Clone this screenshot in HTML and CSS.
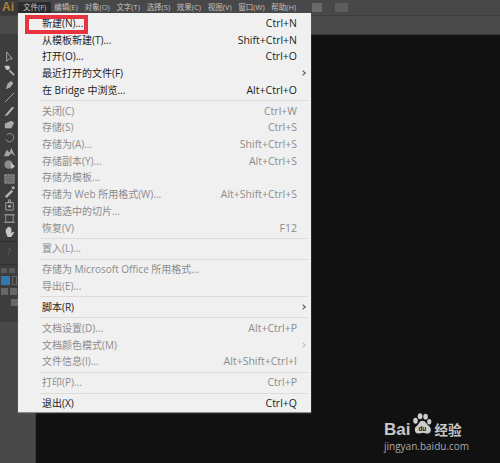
FILE: index.html
```html
<!DOCTYPE html>
<html lang="zh-CN">

<head>
    <meta charset="UTF-8">
    <title>Illustrator</title>
    <link rel="stylesheet" href="styles.css">
</head>

<body>
    <div class="menubar">
        <span class="logo">Ai</span>
        <span class="top-item active">文件(F)</span>
        <span class="top-item">编辑(E)</span>
        <span class="top-item">对象(O)</span>
        <span class="top-item">文字(T)</span>
        <span class="top-item">选择(S)</span>
        <span class="top-item">效果(C)</span>
        <span class="top-item">视图(V)</span>
        <span class="top-item">窗口(W)</span>
        <span class="top-item">帮助(H)</span>
        <span class="bar-btn"></span>
        <span class="bar-btn wide"></span>
    </div>
    <div class="optionsbar"></div>

    <div class="workspace">
        <div class="sidebar">
            <div class="tools">
                <svg class="tool" viewBox="0 0 14 14"><path d="M4 1v10l3-2.500 3 0z" fill="none" stroke="#c4c4c4"/></svg>
                <svg class="tool" viewBox="0 0 14 14"><path d="M2 2l3 3M7 7l5 5" stroke="#bbb" stroke-width="2"/><circle cx="5" cy="4" r="2.500" fill="#ddd"/></svg>
                <svg class="tool" viewBox="0 0 14 14"><path d="M3 12l2-6 4-3 2 3-3 4z" fill="#bbb"/></svg>
                <svg class="tool" viewBox="0 0 14 14"><path d="M2 12L12 2" stroke="#bbb"/></svg>
                <svg class="tool" viewBox="0 0 14 14"><path d="M2 12l3-1 7-8-2-1-7 8z" fill="#c8c8c8"/></svg>
                <svg class="tool" viewBox="0 0 14 14"><path d="M2 11V6l7-3 3 2-3 6z" fill="#bdbdbd"/></svg>
                <svg class="tool" viewBox="0 0 14 14"><path d="M4 4a4.500 4.500 0 1 1-1 5" fill="none" stroke="#aaa"/></svg>
                <svg class="tool" viewBox="0 0 14 14"><path d="M1 12l3-7 3 3 2-5 4 9-4-3-3 3z" fill="#b5b5b5"/></svg>
                <svg class="tool" viewBox="0 0 14 14"><circle cx="6" cy="7" r="4.500" fill="#9a9a9a"/><path d="M8 5l5 4-4 3z" fill="#ddd"/></svg>
                <svg class="tool" viewBox="0 0 14 14"><path d="M2 3h10v9H2z" fill="#777" stroke="#bbb" stroke-dasharray="2 1"/></svg>
                <svg class="tool" viewBox="0 0 14 14"><path d="M2 12l7-7 2 2-7 7zM9 3l2 2 2-2-2-2z" fill="#c4c4c4"/></svg>
                <svg class="tool" viewBox="0 0 14 14"><path d="M3 5h8v8H3zM6 2h2v3H6z" fill="none" stroke="#bbb"/><circle cx="7" cy="9" r="1.500" fill="#ccc"/></svg>
                <svg class="tool" viewBox="0 0 14 14"><path d="M3 3h8v8H3zM1 3h12M1 11h12" fill="none" stroke="#aaa"/></svg>
                <svg class="tool" viewBox="0 0 14 14"><path d="M3 8V4h1.500v3V2.500H6V7 2H7.500v5-4H9v6l2-2 1 1-3 5H5z" fill="#e0e0e0"/></svg>
                <div class="tool-rule"></div>
                <span class="tool-help">?</span>
                <div class="tool-rule"></div>
                <div class="swatches">
                    <span class="swatch-small"></span>
                    <span class="swatch-small"></span>
                </div>
                <div class="swatches">
                    <span class="swatch-blue"></span>
                    <span class="swatch-outline"></span>
                </div>
                <div class="swatches">
                    <span class="swatch-mode"></span>
                    <span class="swatch-mode"></span>
                </div>
                <div class="swatches end">
                    <span class="swatch-mode"></span>
                </div>
            </div>
        </div>
        <div class="canvas">
            <div class="watermark">
                <div class="wm-logo">
                    <span class="wm-bai">Bai</span>
                    <svg class="wm-paw" viewBox="0 0 24 24">
                        <ellipse cx="6" cy="9" rx="2.500" ry="3.200" fill="#ccc"/>
                        <ellipse cx="11" cy="4" rx="2.600" ry="3.300" fill="#ccc"/>
                        <ellipse cx="17" cy="4.500" rx="2.500" ry="3.200" fill="#ccc"/>
                        <ellipse cx="21" cy="10" rx="2.300" ry="3" fill="#ccc"/>
                        <path d="M13.500 9C10 9 10 13 7 15c-3 2-2 8 2 8 2 0 3-1 5-1s3 1 5 1c4 0 5-5 2-8-3-2-4-6-7.500-6z" fill="#ccc"/>
                        <text x="13.500" y="20.500" class="wm-du">du</text>
                    </svg>
                    <span class="wm-cn">经验</span>
                </div>
                <div class="wm-url">jingyan.baidu.com</div>
            </div>
        </div>
    </div>

    <div class="menu">
        <div class="row"><span>新建(N)...</span><span class="keys">Ctrl+N</span></div>
        <div class="row"><span>从模板新建(T)...</span><span class="keys">Shift+Ctrl+N</span></div>
        <div class="row"><span>打开(O)...</span><span class="keys">Ctrl+O</span></div>
        <div class="row arrow"><span>最近打开的文件(F)</span></div>
        <div class="row"><span>在 Bridge 中浏览...</span><span class="keys">Alt+Ctrl+O</span></div>
        <div class="sep"></div>
        <div class="row off"><span>关闭(C)</span><span class="keys">Ctrl+W</span></div>
        <div class="row off"><span>存储(S)</span><span class="keys">Ctrl+S</span></div>
        <div class="row off"><span>存储为(A)...</span><span class="keys">Shift+Ctrl+S</span></div>
        <div class="row off"><span>存储副本(Y)...</span><span class="keys">Alt+Ctrl+S</span></div>
        <div class="row off"><span>存储为模板...</span></div>
        <div class="row off"><span>存储为 Web 所用格式(W)...</span><span class="keys">Alt+Shift+Ctrl+S</span></div>
        <div class="row off"><span>存储选中的切片...</span></div>
        <div class="row off"><span>恢复(V)</span><span class="keys">F12</span></div>
        <div class="sep"></div>
        <div class="row off"><span>置入(L)...</span></div>
        <div class="sep"></div>
        <div class="row off"><span>存储为 Microsoft Office 所用格式...</span></div>
        <div class="row off"><span>导出(E)...</span></div>
        <div class="sep"></div>
        <div class="row arrow"><span>脚本(R)</span></div>
        <div class="sep"></div>
        <div class="row off"><span>文档设置(D)...</span><span class="keys">Alt+Ctrl+P</span></div>
        <div class="row off arrow"><span>文档颜色模式(M)</span></div>
        <div class="row off"><span>文件信息(I)...</span><span class="keys">Alt+Shift+Ctrl+I</span></div>
        <div class="sep"></div>
        <div class="row off"><span>打印(P)...</span><span class="keys">Ctrl+P</span></div>
        <div class="sep"></div>
        <div class="row"><span>退出(X)</span><span class="keys">Ctrl+Q</span></div>
    </div>

    <div class="highlight"></div>
</body>

</html>
```

FILE: styles.css
```css
html,
body {
    margin: 0;
    height: 100%;
    overflow: hidden;
}

body {
    position: relative;
    display: flex;
    flex-direction: column;
    background: #111;
    font-family: "Open Sans", "Noto Sans CJK SC", sans-serif;
}

.menubar {
    height: 15px;
    display: flex;
    align-items: flex-end;
    background: #484848;
    border-bottom: 1px solid #3e3e3e;
}

.logo {
    align-self: stretch;
    width: 18px;
    padding-left: 2px;
    box-sizing: border-box;
    font: bold 12px/15px "Liberation Sans", sans-serif;
    color: #a9813a;
    background: #3a3a3a;
}

.top-item {
    font-size: 7.500px;
    line-height: 11px;
    color: #c0c0c0;
    padding: 0 3.350px;
    white-space: nowrap;
    margin-bottom: 2px;
}

.top-item.active {
    padding: 0 4.500px 0 5px;
    background: #2c2c2c;
}

.bar-btn {
    align-self: center;
    width: 10px;
    height: 9px;
    margin-left: 12px;
    background: #6a6a6a;
}

.bar-btn.wide {
    width: 13px;
    margin-left: 13px;
    background: #5d5d5d;
}

.optionsbar {
    height: 18px;
    background: #4a4a4a;
    border-bottom: 1px solid #383838;
}

.workspace {
    flex: 1;
    display: flex;
    min-height: 0;
}

.sidebar {
    width: 36px;
    background: #484848;
    border-right: 1px solid #3c3c3c;
    box-sizing: border-box;
}

.tools {
    width: 18px;
    height: 287px;
    padding-top: 16px;
    box-sizing: border-box;
    background: #3d3d3d;
    display: flex;
    flex-direction: column;
    align-items: center;
    gap: 0.400px;
}

.tool {
    width: 13px;
    height: 13px;
    opacity: 0.85;
}

.tool-rule {
    width: 18px;
    height: 1px;
    margin-top: 3px;
    background: #2f2f2f;
}

.tool-help {
    font-size: 9px;
    line-height: 18px;
    color: #666;
}

.swatches {
    width: 18px;
    display: flex;
    gap: 2px;
    padding: 2px 0 1px 1px;
    box-sizing: border-box;
}

.swatches.end {
    justify-content: flex-end;
}

.swatch-small {
    width: 6px;
    height: 5px;
    background: #5a5a5a;
}

.swatch-blue {
    width: 9px;
    height: 9px;
    background: #2f78b0;
}

.swatch-outline {
    width: 5px;
    height: 9px;
    border: 1px solid #666;
    box-sizing: border-box;
}

.swatch-mode {
    width: 7px;
    height: 7px;
    background: #666;
}

.canvas {
    flex: 1;
    position: relative;
    background: #111;
}

.menu {
    position: absolute;
    left: 18px;
    top: 13px;
    width: 293px;
    box-sizing: border-box;
    padding: 2px 14px 0 24px;
    background: #f0f0f0;
    box-shadow: 0 1px 1px #8a8a8a;
    font-size: 10px;
    color: #1c1c1c;
}

.row {
    height: 16.700px;
    line-height: 16.700px;
    display: flex;
    justify-content: space-between;
    white-space: nowrap;
}

.keys {
    font-size: 10.500px;
}

.row.off {
    color: #8c8c8c;
}

.row.arrow {
    position: relative;
}

.row.arrow::after {
    content: "";
    position: absolute;
    right: -8px;
    top: 6px;
    width: 3px;
    height: 3px;
    border-top: 1px solid #555;
    border-right: 1px solid #555;
    transform: rotate(45deg);
}

.row.off.arrow::after {
    border-color: #c0c0c0;
}

.sep {
    height: 4.250px;
    margin: 0 -11px 0 -2px;
    display: flex;
    align-items: center;
}

.sep::before {
    content: "";
    flex: 1;
    height: 1px;
    background: #dcdcdc;
}

.highlight {
    position: absolute;
    left: 25px;
    top: 15px;
    width: 63px;
    height: 19px;
    box-sizing: border-box;
    border: 4px solid #e7343f;
}

.watermark {
    position: absolute;
    right: 28px;
    bottom: 11px;
    width: 88px;
    color: #c8c8c8;
}

.wm-logo {
    display: flex;
    align-items: flex-end;
    height: 28px;
}

.wm-bai {
    font: bold 17px/15px "Liberation Sans", sans-serif;
}

.wm-paw {
    width: 22px;
    height: 27px;
}

.wm-du {
    font: bold 7px "Liberation Sans", sans-serif;
    fill: #111;
    text-anchor: middle;
}

.wm-cn {
    font: bold 13.500px/15px "Noto Sans CJK SC", sans-serif;
    margin-left: 2px;
    white-space: nowrap;
}

.wm-url {
    margin-top: 3px;
    font: 10px/12px "Open Sans", sans-serif;
    color: #aaa;
    white-space: nowrap;
}
```
